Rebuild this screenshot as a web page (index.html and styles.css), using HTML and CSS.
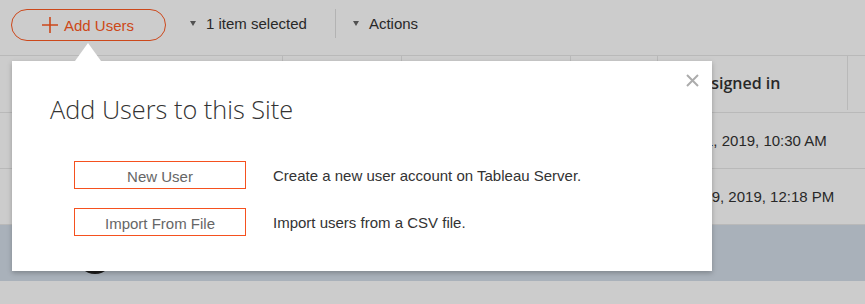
FILE: index.html
```html
<html>
<head>
  <meta charset="UTF-8"/>
  <title>Users</title>
  <link rel="stylesheet" href="styles.css">
</head>
<body>
<div class="page">

  <div class="toolbar">
    <button class="add-users">
      <svg class="plus" width="16" height="16" viewBox="0 0 16 16"><path d="M8 0V16M0 8H16" stroke="currentColor" stroke-width="1.6"/></svg>
      <span>Add Users</span>
    </button>
    <div class="menu first"><span class="caret"></span>1 item selected</div>
    <div class="divider"></div>
    <div class="menu"><span class="caret"></span>Actions</div>
  </div>

  <div class="grid">
    <div class="row head">
      <div class="cell">Display Name</div>
      <div class="cell">Username</div>
      <div class="cell">Site Role</div>
      <div class="cell">Groups</div>
      <div class="cell">Last signed in</div>
      <div class="cell last"></div>
    </div>
    <div class="row">
      <div class="cell"></div><div class="cell"></div><div class="cell"></div><div class="cell"></div>
      <div class="cell date">Feb 1, 2019, 10:30 AM</div>
      <div class="cell"></div>
    </div>
    <div class="row">
      <div class="cell"></div><div class="cell"></div><div class="cell"></div><div class="cell"></div>
      <div class="cell date">Jan 29, 2019, 12:18 PM</div>
      <div class="cell"></div>
    </div>
    <div class="row selected">
      <div class="cell"><span class="avatar"></span></div>
      <div class="cell"></div><div class="cell"></div><div class="cell"></div>
      <div class="cell date"></div>
      <div class="cell"></div>
    </div>
  </div>

  <div class="overlay"></div>

  <div class="popover">
    <span class="pointer"></span>
    <svg class="close" width="13" height="13" viewBox="0 0 13 13"><path d="M1 1L12 12M12 1L1 12" stroke="#acacac" stroke-width="2"/></svg>
    <h1>Add Users to this Site</h1>
    <div class="choice">
      <button class="choice-btn">New User</button>
      <span>Create a new user account on Tableau Server.</span>
    </div>
    <div class="choice">
      <button class="choice-btn">Import From File</button>
      <span>Import users from a CSV file.</span>
    </div>
  </div>

</div>
</body>
</html>
```

FILE: styles.css
```css
body {margin: 0; font: 15px "Liberation Sans", Arial, sans-serif; color: #333; background: #fff}
.page {position: relative; width: 865px; height: 304px; overflow: hidden}

/* toolbar */
.toolbar {display: flex; align-items: flex-start; box-sizing: border-box; height: 56px; padding: 9px 0 0 11px; border-bottom: 1px solid #e8e8e8}
.add-users {display: flex; align-items: center; box-sizing: border-box; width: 155px; height: 32px; padding: 0 0 0 30px; border: 1px solid #ff5a22; border-radius: 16px; background: #fff; color: #ff5a22; font: 15px "Liberation Sans", Arial, sans-serif}
.add-users .plus {margin: 0 6px 0 0}
.menu {display: flex; align-items: center; height: 28px; margin-left: 17px; color: #333}
.menu.first {margin-left: 24px}
.caret {width: 0; height: 0; margin: 1px 10px 0 0; border-left: 3px solid transparent; border-right: 3px solid transparent; border-top: 5px solid #666}
.divider {width: 1px; height: 29px; margin-left: 28px; background: #e0e0e0}

/* table */
.row {display: grid; grid-template-columns: 283px 119px 169px 87px 190px 1fr; box-sizing: border-box; height: 56px; border-bottom: 1px solid #e8e8e8}
.row .cell {display: flex; align-items: center; padding-left: 17px}
.row .cell:first-child {padding-left: 0}
.head {height: 57px}
.head .cell {border-right: 1px solid #e8e8e8; margin-bottom: 2px; font: 600 16px "Open Sans", sans-serif; color: #333; white-space: nowrap}
.head .cell:first-child {padding-left: 60px}
.head .cell.last {border-right: 0}
.date {white-space: nowrap}
.selected {background: #d4dee9; border-bottom: 0}
.avatar {display: block; width: 36px; height: 36px; margin: 5px 0 0 77px; border-radius: 50%; background: #222}

.overlay {position: absolute; left: 0; top: 0; right: 0; bottom: 0; background: rgba(0, 0, 0, 0.2)}

/* popover */
.popover {position: absolute; left: 12px; top: 61px; box-sizing: border-box; width: 700px; height: 210px; padding: 31px 0 0 38px; background: #fff; box-shadow: 0 2px 5px rgba(0, 0, 0, 0.25)}
.pointer {position: absolute; left: 63px; top: -18px; width: 0; height: 0; border-left: 13px solid transparent; border-right: 13px solid transparent; border-bottom: 18px solid #fff}
.close {position: absolute; left: 674px; top: 13px}
.popover h1 {margin: 0 0 35px 0; font: 300 25.3px "Open Sans", sans-serif; color: #333; line-height: 34px}
.choice {display: flex; align-items: center; margin: 0 0 19px 24px}
.choice-btn {box-sizing: border-box; width: 172px; height: 28px; padding: 3px 0 0 0; margin-right: 27px; border: 1px solid #f5511f; background: #fff; color: #666; font: 15px "Liberation Sans", Arial, sans-serif}
```
